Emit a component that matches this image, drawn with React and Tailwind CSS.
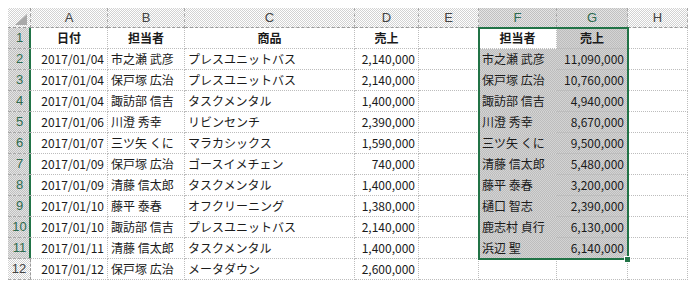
const rows = [
  ['日付', '担当者', '商品', '売上', '', '担当者', '売上'],
  ['2017/01/04', '市之瀬 武彦', 'プレスユニットバス', '2,140,000', '', '市之瀬 武彦', '11,090,000'],
  ['2017/01/04', '保戸塚 広治', 'プレスユニットバス', '2,140,000', '', '保戸塚 広治', '10,760,000'],
  ['2017/01/04', '諏訪部 信吉', 'タスクメンタル', '1,400,000', '', '諏訪部 信吉', '4,940,000'],
  ['2017/01/06', '川澄 秀幸', 'リビンセンチ', '2,390,000', '', '川澄 秀幸', '8,670,000'],
  ['2017/01/07', '三ツ矢 くに', 'マラカシックス', '1,590,000', '', '三ツ矢 くに', '9,500,000'],
  ['2017/01/09', '保戸塚 広治', 'ゴースイメチェン', '740,000', '', '清藤 信太郎', '5,480,000'],
  ['2017/01/09', '清藤 信太郎', 'タスクメンタル', '1,400,000', '', '藤平 泰春', '3,200,000'],
  ['2017/01/10', '藤平 泰春', 'オフクリーニング', '1,380,000', '', '樋口 智志', '2,390,000'],
  ['2017/01/10', '諏訪部 信吉', 'プレスユニットバス', '2,140,000', '', '鹿志村 貞行', '6,130,000'],
  ['2017/01/11', '清藤 信太郎', 'タスクメンタル', '1,400,000', '', '浜辺 聖', '6,140,000'],
  ['2017/01/12', '保戸塚 広治', 'メータダウン', '2,600,000', '', '', ''],
];

const letters = ['A', 'B', 'C', 'D', 'E', 'F', 'G', 'H'];
// right aligned columns (dates, amounts)
const rightCols = [0, 3, 6];

const hdr = 'bg-[conic-gradient(#d2d2d2_25%,#ffffff_0_50%,#d2d2d2_0_75%,#ffffff_0)] bg-[length:2px_2px]';
const hdrSel = 'bg-[conic-gradient(#c0c0c0_25%,#e4e4e4_0_50%,#c0c0c0_0_75%,#e4e4e4_0)] bg-[length:2px_2px]';
const cellSel = 'bg-[conic-gradient(#bdbdbd_25%,#d3d3d3_0_50%,#bdbdbd_0_75%,#d3d3d3_0)] bg-[length:2px_2px]';

function Cell({ r, c, value }) {
  const selected = r >= 1 && r <= 10 && (c === 5 || c === 6);
  const gSel = r === 0 && c === 6;
  const head = r === 0;
  let align = 'justify-start pl-[3px]';
  if (head) align = 'justify-center';
  else if (rightCols.includes(c)) align = 'justify-end pr-[3px]';
  return (
    <div
      className={`flex items-center overflow-hidden whitespace-nowrap border-r border-b border-dotted border-[#bdbdbd] text-[12px] text-[#1a1a1a] ${align} ${head ? 'font-bold' : ''} ${selected || gSel ? cellSel : 'bg-white'}`}
    >
      {value}
    </div>
  );
}

export default function App() {
  return (
    <div className="bg-white w-[698px] h-[284px] pt-2 pl-2" style={{ fontFamily: '"Noto Sans CJK JP", "Noto Sans", sans-serif' }}>
      <div className="relative grid grid-cols-[23px_77px_77px_170px_64px_60px_78px_71px_60px] grid-rows-[20px_repeat(12,21px)] w-max">
        <div className={`relative border-r border-b border-dashed border-[#9a9a9a] ${hdr}`}>
          <svg className="absolute right-[3px] bottom-[2px]" width="12" height="11" viewBox="0 0 12 11">
            <polygon points="12,0 12,11 0,11" fill="#a9a9a9" />
          </svg>
        </div>
        {letters.map((l, i) => {
          const sel = i === 5 || i === 6;
          return (
            <div
              key={l}
              className={`flex items-center justify-center text-[13px] border-r border-b border-dashed border-r-[#a8a8a8] border-b-[#9a9a9a] ${sel ? `${hdrSel} text-[#2e6b4f]` : `${hdr} text-[#444]`}`}
              style={{ fontFamily: '"Liberation Sans", Arial, sans-serif' }}
            >
              {l}
            </div>
          );
        })}
        {rows.map((row, r) => (
          <div key={r} className="contents">
            <div
              className={`flex items-center justify-center text-[13px] border-b border-dashed border-[#a8a8a8] ${r <= 10 ? `${hdrSel} text-[#2e6b4f] shadow-[inset_-2px_0_0_#217346]` : `${hdr} text-[#444] border-r border-r-[#9a9a9a]`}`}
              style={{ fontFamily: '"Liberation Sans", Arial, sans-serif' }}
            >
              {r + 1}
            </div>
            {row.map((v, c) => (
              <Cell key={c} r={r} c={c} value={v} />
            ))}
            <Cell r={r} c={7} value="" />
          </div>
        ))}
        <div className="absolute left-[470px] top-[19px] w-[151px] h-[233px] border-2 border-[#217346] pointer-events-none" />
        <div className="absolute left-[616px] top-[248px] w-[7px] h-[7px] bg-[#217346] border border-white" />
      </div>
    </div>
  );
}
